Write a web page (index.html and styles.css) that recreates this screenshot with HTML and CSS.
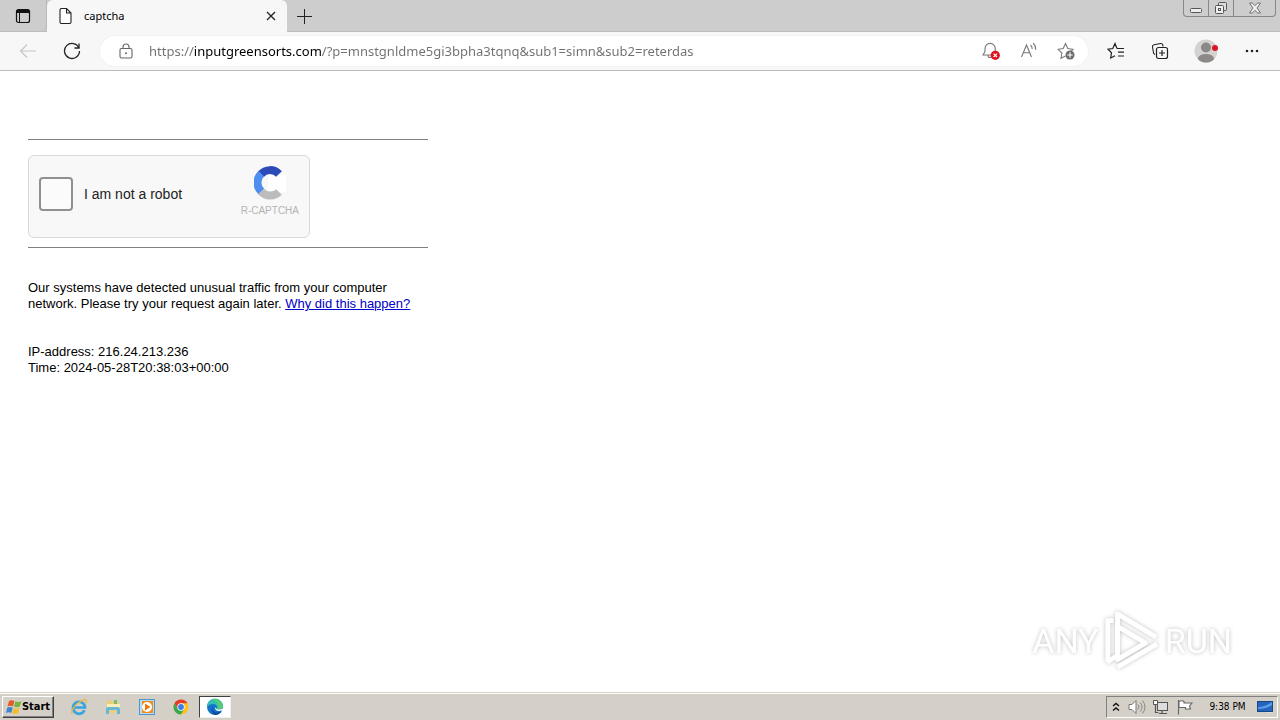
FILE: index.html
```html
<!DOCTYPE html>
<html lang="en">
<head>
<meta charset="utf-8">
<title>captcha</title>
<link rel="stylesheet" href="styles.css">
</head>
<body>
<header class="tabstrip">
  <button class="tab-actions" aria-label="Tab actions">
    <svg width="16" height="16" viewBox="0 0 16 16"><rect x="1.5" y="1.5" width="13" height="13" rx="2" fill="none" stroke="#111" stroke-width="1.2"/><path d="M1.5 5V3.5a2 2 0 0 1 2-2h9a2 2 0 0 1 2 2V5z" fill="#111"/><path d="M4.5 5v9.500" stroke="#111"/></svg>
  </button>
  <div class="tab">
    <svg width="14" height="16" viewBox="0 0 14 16"><path d="M2.500.5h5l4.500 4.500v9a1.500 1.500 0 0 1-1.500 1.500h-8A1.500 1.500 0 0 1 1 14V2A1.500 1.500 0 0 1 2.500.5zM7.500.5V5H12" fill="#fff" stroke="#222" stroke-width="1.100"/></svg>
    <span class="tab-title">captcha</span>
    <button class="tab-close" aria-label="Close tab"><svg width="10" height="10" viewBox="0 0 10 10"><path d="M1 1l8 8M9 1L1 9" stroke="#222" stroke-width="1.300"/></svg></button>
  </div>
  <button class="new-tab" aria-label="New tab"><svg width="15" height="15" viewBox="0 0 15 15"><path d="M7.500 0v15M0 7.500h15" stroke="#222"/></svg></button>
  <div class="window-controls">
    <button aria-label="Minimize"><svg width="14" height="14" viewBox="0 0 14 14"><rect x="1.500" y="7.500" width="11" height="4" rx="1" fill="#eee" stroke="#555"/></svg></button>
    <button aria-label="Restore"><svg width="14" height="14" viewBox="0 0 14 14"><rect x="4.500" y="1.500" width="8" height="8" rx="1" fill="#ddd" stroke="#555"/><rect x="1.500" y="4.500" width="8" height="8" rx="1" fill="#eee" stroke="#555"/><rect x="4.500" y="7.500" width="2" height="2" fill="none" stroke="#555"/></svg></button>
    <button class="window-close" aria-label="Close"><svg width="14" height="12" viewBox="0 0 14 12"><path d="M1.500 1h3L7 3.700 9.500 1h3L9 6l3.500 5h-3L7 8.300 4.500 11h-3L5 6z" fill="#eee" stroke="#666" stroke-width=".9"/></svg></button>
  </div>
</header>

<nav class="toolbar">
  <button class="tool" aria-label="Back"><svg width="18" height="16" viewBox="0 0 18 16"><path d="M17 8H2M8 1.500L1.500 8 8 14.500" fill="none" stroke="#c6c6c6" stroke-width="1.200"/></svg></button>
  <button class="tool" aria-label="Refresh"><svg width="18" height="18" viewBox="0 0 18 18"><path d="M15.900 6A7.500 7.500 0 1 0 16.500 9" fill="none" stroke="#222" stroke-width="1.300"/><path d="M16 1.500V6h-4.500" fill="none" stroke="#222" stroke-width="1.300"/></svg></button>
  <div class="address">
    <svg class="lock" width="14" height="16" viewBox="0 0 14 16"><rect x="1" y="5.500" width="12" height="9.500" rx="1.500" fill="none" stroke="#666" stroke-width="1.100"/><path d="M4 5.500V4a3 3 0 0 1 6 0v1.500" fill="none" stroke="#666" stroke-width="1.100"/><circle cx="7" cy="10.200" r="1" fill="#666"/></svg>
    <input class="url" type="text" aria-label="Address" spellcheck="false" value="https://inputgreensorts.com/?p=mnstgnldme5gi3bpha3tqnq&amp;sub1=simn&amp;sub2=reterdas">
    <button class="inner-tool" aria-label="Notifications blocked"><svg width="18" height="18" viewBox="0 0 18 18"><path d="M1 13h14l-1.800-3.500V6.500a5 5 0 0 0-10.200 0v3zM6 13.500a2 2 0 0 0 4 0" fill="none" stroke="#777" stroke-width="1.100"/><circle cx="13.300" cy="13.300" r="4.600" fill="#e0101c"/><path d="M11.600 11.600l3.400 3.400M15 11.600L11.600 15" stroke="#fff" stroke-width="1.200"/></svg></button>
    <button class="inner-tool" aria-label="Read aloud"><svg width="18" height="18" viewBox="0 0 18 18"><path d="M1.500 15L6.500 3l5 12M3.300 10.800h6.500M10.500 3a5 5 0 0 1 1.700 4M13 1.200a8 8 0 0 1 2.700 6.500" fill="none" stroke="#777" stroke-width="1.100"/></svg></button>
    <button class="inner-tool favorite" aria-label="Add to favorites"><svg width="18" height="18" viewBox="0 0 18 18"><path d="M8.500 14L4 16.200l.9-5.200L1 7.300l5.200-.8L8.500 1.500l2.300 5 5.200.8-2 2" fill="none" stroke="#777" stroke-width="1.100"/><circle cx="13" cy="13" r="4.500" fill="#6b6b6b"/><path d="M13 10.300v5.400M10.300 13h5.400" stroke="#fff" stroke-width="1.100"/></svg></button>
  </div>
  <div class="tools">
    <button class="tool" aria-label="Favorites"><svg width="18" height="18" viewBox="0 0 18 18"><path d="M10 6.500L8 1.500l-2.200 5-4.800.7 3.500 3.600L3.700 16 8 13.700M10 6.500h7M11 10.200h6M11 14h6" fill="none" stroke="#222" stroke-width="1.200"/></svg></button>
    <button class="tool" aria-label="Collections"><svg width="18" height="18" viewBox="0 0 18 18"><path d="M4 12.500L2.600 11.300 1.500 5a2 2 0 0 1 1.500-2.300l6.500-1.200a2 2 0 0 1 2.300 1.500l.2 1.500" fill="none" stroke="#222" stroke-width="1.100"/><rect x="5.500" y="5.500" width="11" height="11" rx="2" fill="none" stroke="#222" stroke-width="1.200"/><path d="M11 8v6M8 11h6" stroke="#222" stroke-width="1.200"/></svg></button>
    <button class="tool profile" aria-label="Profile"><svg width="26" height="24" viewBox="0 0 26 24"><defs><clipPath id="face"><circle cx="13" cy="12" r="11.500"/></clipPath></defs><circle cx="13" cy="12" r="11.500" fill="#d5d3d1"/><g clip-path="url(#face)" fill="#8c8988"><circle cx="13" cy="8.500" r="5"/><ellipse cx="13" cy="19.500" rx="8" ry="4.500"/></g><circle cx="22" cy="9" r="3" fill="#dc1620"/></svg></button>
    <button class="tool" aria-label="Settings and more"><svg width="14" height="4" viewBox="0 0 14 4"><circle cx="2" cy="2" r="1.300" fill="#222"/><circle cx="7" cy="2" r="1.300" fill="#222"/><circle cx="12" cy="2" r="1.300" fill="#222"/></svg></button>
  </div>
</nav>

<main class="page">
  <hr class="rule">
  <div class="captcha">
    <label class="check"><input type="checkbox" class="box"><span>I am not a robot</span></label>
    <div class="brand">
      <svg width="32" height="34" viewBox="0 0 32 34"><rect x="14" y="9" width="18" height="17" fill="#fff"/><g fill="none" stroke-width="8"><path d="M6.800 8.300A12.300 12.300 0 0 1 25 8" stroke="#2c4bb8"/><path d="M7.500 25.800A12.300 12.300 0 0 1 7.300 7.700" stroke="#4f8df0"/><path d="M7 25.300A12.300 12.300 0 0 0 25 26" stroke="#bcbcbc"/></g></svg>
      <span>R-CAPTCHA</span>
    </div>
  </div>
  <hr class="rule">
  <p class="notice">Our systems have detected unusual traffic from your computer<br>network. Please try your request again later. <a href="#">Why did this happen?</a></p>
  <p class="details">IP-address: 216.24.213.236<br>Time: 2024-05-28T20:38:03+00:00</p>
  <div class="watermark">
    <span>ANY</span>
    <svg width="58" height="64" viewBox="0 0 60 66"><g fill="none" stroke="#fff" stroke-width="5" stroke-linejoin="round"><path d="M15 44V5l40 24"/><path d="M15 18l29 17-29 17z"/><path d="M5 54V12h6"/><path d="M4 55l11-7M15 60l41-24"/></g></svg>
    <span>RUN</span>
  </div>
</main>

<footer class="taskbar">
  <button class="start"><svg width="16" height="16" viewBox="0 0 16 16"><path d="M3 2q2.500-1.600 5.300 0L7 7.500q-2.500-1.500-5.500 0z" fill="#e8592a"/><path d="M9.300 2.300q2.500 1.500 6 0l-1.500 5.200q-2.700 1.500-5.700 0z" fill="#77b43c"/><path d="M1.200 8.700q2.500-1.600 5.500 0l-1.400 5.300q-2.500-1.500-5.300 0z" fill="#3c86d0"/><path d="M7.800 9q2.500 1.500 5.700 0L12 14.200q-2.700 1.500-5.600 0z" fill="#f5bd27"/></svg><span>Start</span></button>
  <div class="quick">
    <button aria-label="Internet Explorer"><svg width="18" height="18" viewBox="0 0 18 18"><path d="M14.500 12.200A6 6 0 1 1 15 9.500H4" fill="none" stroke="#36a5df" stroke-width="2.700"/><path d="M2.500 16C-1 14 6 5 13 2.200c4-1.500 4 .8 3 3" fill="none" stroke="#e9b83c" stroke-width="1.300"/></svg></button>
    <button aria-label="Explorer"><svg width="18" height="18" viewBox="0 0 18 18"><path d="M2 3l5-1 1 2h7l1 11H3z" fill="#e9cf7d"/><path d="M3 6h13v5H3z" fill="#f9eeb9"/><path d="M10 2h3v4h-3z" fill="#7dbd63"/><path d="M2 16V11q0-2 2-2h10q2 0 2 2v5h-3v-4H5v4z" fill="#66b8d7"/></svg></button>
    <button aria-label="Media Player"><svg width="18" height="18" viewBox="0 0 18 18"><rect x="1.500" y="1.500" width="15" height="15" fill="#b9dcf4" stroke="#4c95ca"/><rect x="4" y="3" width="11" height="12" fill="#f18c1c"/><circle cx="9" cy="9" r="5" fill="#fff"/><path d="M7 5.500l5.500 3.500L7 12.500z" fill="#f0780a"/></svg></button>
    <button aria-label="Chrome"><svg width="18" height="18" viewBox="0 0 18 18"><circle cx="9" cy="9" r="7.500" fill="#fbc31b"/><path d="M2.500 5.300A7.500 7.500 0 0 1 15.500 5.300H9L5.800 11z" fill="#e33b2e"/><path d="M2.500 5.300A7.500 7.500 0 0 0 8.800 16.500L12.200 11 9 9 5.800 11z" fill="#38a852"/><circle cx="9" cy="9" r="3.700" fill="#fff"/><circle cx="9" cy="9" r="2.900" fill="#3b7de8"/></svg></button>
    <button class="active" aria-label="Edge"><svg width="18" height="18" viewBox="0 0 18 18"><circle cx="9" cy="9" r="8" fill="#1473c8"/><path d="M1 9A8 8 0 0 1 17 8c0 3-3 4-6 3.200C12 9 10.500 6 7 6 4 6 2 7.500 1 9z" fill="#35bfb4"/><path d="M9 1a8 8 0 0 1 8 7c0 3-3 4-6 3.200C13 8 12 3 6 1.700z" fill="#55cb78"/><path d="M7 9c-2 3 2 7 8.500 4.500A8 8 0 0 1 9 17C5 15 5 11 7 9z" fill="#0c4e9e"/><path d="M9.200 9.200c-.7 3 3 4.500 6.800 3.300l2-2v-1c-2 2-5 2.500-7 1.700z" fill="#fff"/></svg></button>
  </div>
  <div class="tray">
    <button class="chevrons" aria-label="Show hidden icons"><svg width="8" height="10" viewBox="0 0 8 10"><path d="M1 4l3-2.500L7 4M1 8.500L4 6l3 2.500" fill="none" stroke="#111" stroke-width="1.400"/></svg></button>
    <button aria-label="Volume"><svg width="18" height="16" viewBox="0 0 18 16"><path d="M1 5.500h3l4-4v13l-4-4H1z" fill="#fff" stroke="#777"/><path d="M10 5.500q2 2.500 0 5M12.300 3.500q3.500 4.500 0 9M14.500 1.500q5 6.500 0 13" fill="none" stroke="#888"/></svg></button>
    <button aria-label="Network"><svg width="18" height="16" viewBox="0 0 18 16"><rect x="5.500" y="3.500" width="10" height="8" fill="#ddd" stroke="#555"/><path d="M1.500 1.500h4v4h-4z" fill="#fff" stroke="#555"/><path d="M3.500 5.500v8h3M7 14.500h8M10 12v2" fill="none" stroke="#555" stroke-width="1.200"/></svg></button>
    <button aria-label="Action Center"><svg width="18" height="16" viewBox="0 0 18 16"><path d="M2.500 1v14.500M3 2.500q3-1.500 5 0V4h8l-2.500 3 1 3H9.500V8.500H3z" fill="#fff" stroke="#666" stroke-width="1.100"/></svg></button>
    <time>9:38 PM</time>
    <button class="desktop" aria-label="Show desktop"><svg width="16" height="14" viewBox="0 0 16 14"><rect x=".5" y="1.500" width="15" height="10" fill="#2563bd" stroke="#174886"/><path d="M1 7Q8 7 15 2v3Q10 9 1 9z" fill="#5a9ce5"/><path d="M9 12.500h6" stroke="#ddd"/></svg></button>
  </div>
</footer>
</body>
</html>
```

FILE: styles.css
```css
* { box-sizing: border-box; }

body {
  margin: 0;
  min-height: 100vh;
  display: flex;
  flex-direction: column;
  background: #fff;
  color: #000;
  font-family: "Liberation Sans", Arial, sans-serif;
  font-size: 13px;
  line-height: 16px;
}

button {
  display: flex;
  align-items: center;
  justify-content: center;
  border: 0;
  padding: 0;
  background: none;
  font: inherit;
  color: inherit;
}

svg { display: block; flex: none; }

.tabstrip {
  display: flex;
  height: 32px;
  background: #cdcdcd;
  box-shadow: inset 0 -1px #bdbdbd;
}

.tab-actions { width: 47px; border-right: 1px solid #b8b8b8; border-radius: 0 0 6px 0; }

.tab {
  display: flex;
  align-items: center;
  width: 240px;
  padding: 0 8px 0 12px;
  background: #f7f7f7;
  border-radius: 6px 6px 0 0;
}

.tab-title {
  flex: 1;
  padding-left: 11px;
  font-family: "Noto Sans", "Open Sans", sans-serif;
  font-size: 11px;
}

.tab-close { width: 16px; height: 16px; }
.new-tab { width: 35px; }

.window-controls {
  display: flex;
  height: 17px;
  margin: 0 4px 0 auto;
  border: 1px solid #888;
  border-top: 0;
  border-radius: 0 0 4px 4px;
}

.window-controls button { width: 25px; border-right: 1px solid #888; }
.window-controls .window-close { width: 41px; border-right: 0; }

.toolbar {
  display: flex;
  align-items: center;
  height: 39px;
  padding: 0 6px;
  background: #f7f7f7;
  border-bottom: 1px solid #bcbcbc;
}

.tool { width: 44px; height: 32px; }
.tools { display: flex; }
.tools .profile { width: 48px; }

.address {
  display: flex;
  align-items: center;
  flex: 1;
  height: 30px;
  margin: 0 6px;
  padding: 0 4px 0 19px;
  border-radius: 15px;
  background: #fff;
  box-shadow: 0 0 0 1px #f2f2f2;
}

.url {
  flex: 1;
  min-width: 0;
  height: 24px;
  margin-left: 16px;
  padding: 0;
  border: 0;
  outline: 0;
  background: linear-gradient(to right, #707070 45px, #000 45px, #000 173px, #707070 173px);
  -webkit-background-clip: text;
  background-clip: text;
  color: transparent;
  font-family: "Noto Sans", "Open Sans", sans-serif;
  font-size: 13px;
}

.inner-tool { width: 38px; height: 28px; }
.inner-tool.favorite { width: 36px; }

.page {
  position: relative;
  flex: 1;
  padding: 68px 28px 0;
}

.rule {
  max-width: 400px;
  height: 1px;
  margin: 0;
  border: 0;
  background: #808080;
}

.captcha {
  display: flex;
  justify-content: space-between;
  max-width: 282px;
  height: 83px;
  margin: 15px 0 9px;
  padding: 0 10px;
  border: 1px solid #d8d8d8;
  border-radius: 6px;
  background: #f8f8f8;
}

.check {
  display: flex;
  align-items: center;
  gap: 11px;
  padding-bottom: 5px;
  color: #222;
  font-size: 14px;
}

.box {
  appearance: none;
  width: 34px;
  height: 34px;
  margin: 0;
  border: 2px solid #909090;
  border-radius: 4px;
  background: #fbfbfb;
}

.brand {
  display: flex;
  flex-direction: column;
  align-items: center;
  gap: 5px;
  padding-top: 10px;
  color: #b4b4b4;
  font-size: 10px;
  line-height: 12px;
}

.notice { margin: 32px 0; }
.notice a { color: #0000c8; }
.details { margin: 0; }

.watermark {
  position: absolute;
  right: 48px;
  bottom: 19px;
  display: flex;
  align-items: center;
  gap: 4px;
  color: #fff;
  font-family: "Roboto", sans-serif;
  font-size: 34px;
  line-height: 40px;
  filter: drop-shadow(0 0 2px rgba(0, 0, 0, 0.25));
}

.taskbar {
  display: flex;
  align-items: center;
  height: 28px;
  padding: 3px 2px 2px;
  background: #d4d0c8;
  border-top: 1px solid #d4d0c8;
  box-shadow: inset 0 1px #fff;
  font-family: "DejaVu Sans Condensed", "DejaVu Sans", sans-serif;
  font-size: 11px;
}

.start {
  width: 52px;
  height: 22px;
  border: 1px solid;
  border-color: #fff #404040 #404040 #fff;
  box-shadow: inset -1px -1px #808080;
  font-weight: bold;
}

.quick { display: flex; gap: 2px; margin-left: 9px; }
.quick button { width: 32px; height: 22px; }
.quick .active {
  background: #fff;
  border: 1px solid;
  border-color: #404040 #eee #eee #404040;
}

.tray {
  display: flex;
  align-items: center;
  height: 22px;
  margin-left: auto;
  border: 1px solid;
  border-color: #808080 #fff #fff #808080;
}

.tray button { width: 24px; }
.tray .chevrons { width: 18px; }
.tray time { width: 56px; text-align: center; font-size: 10px; padding-left: 5px; }
.tray .desktop { width: 24px; }
```
